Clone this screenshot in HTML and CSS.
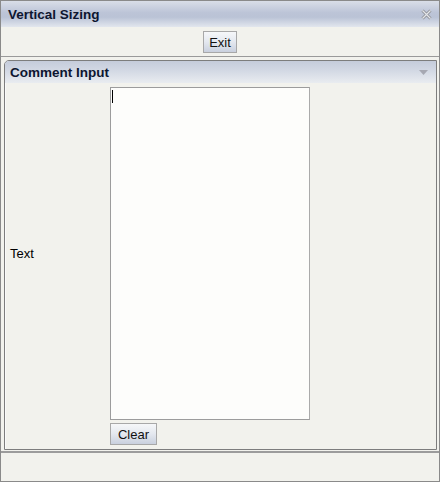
FILE: index.html
```html
<!DOCTYPE html>
<html lang="en">
<head>
  <meta charset="UTF-8" />
  <title>Vertical Sizing</title>
  <link rel="stylesheet" href="styles.css">
</head>
<body>

<div class="window">

  <div class="titlebar">
    <span class="title">Vertical Sizing</span>
    <svg class="close" width="11" height="11" viewBox="0 0 11 11">
      <path d="M1.5 1.5 L9.5 9.5 M9.5 1.5 L1.5 9.5" stroke="#8e9096" stroke-width="3" fill="none"/>
      <path d="M1.5 1.5 L9.5 9.5 M9.5 1.5 L1.5 9.5" stroke="#e4e6ea" stroke-width="1.2" fill="none"/>
    </svg>
  </div>

  <div class="toolbar">
    <button class="btn">Exit</button>
  </div>

  <div class="content">
    <div class="panel">
      <div class="panel-head">
        <span class="panel-title">Comment Input</span>
        <svg class="arrow" width="9" height="6" viewBox="0 0 9 6">
          <path d="M0 0 L9 0 L4.5 5 Z" fill="#a6a8b2"/>
        </svg>
      </div>
      <div class="panel-body">
        <label for="comment" class="label">Text</label>
        <div class="field">
          <textarea id="comment"></textarea>
          <span class="caret"></span>
        </div>
        <div class="actions">
          <button class="btn btn-wide">Clear</button>
        </div>
      </div>
    </div>
  </div>

  <div class="statusbar"></div>
</div>

</body>
</html>
```

FILE: styles.css
```css
:root {
  --bg: #f2f2ed;
  --line: #8a8a8a;
  --text: #000;
  --title: #0d1630;
}
* {
  box-sizing: border-box;
}
body {
  margin: 0;
  font-family: 'Liberation Sans', Arial, sans-serif;
  font-size: 13px;
  color: var(--text);
  background: var(--bg);
}
.window {
  width: 440px;
  height: 482px;
  border: 1px solid var(--line);
  display: flex;
  flex-direction: column;
  background: var(--bg);
}
.titlebar {
  height: 26px;
  flex: none;
  display: flex;
  align-items: center;
  justify-content: space-between;
  padding: 0 7px 0 7px;
  background: linear-gradient(#d9dee8, #bcc4d7 45%, #bac3d6 62%, #e2e6ee);
}
.title,
.panel-title {
  font-weight: bold;
  font-size: 13.5px;
  color: var(--title);
}
.toolbar {
  height: 30px;
  flex: none;
  display: flex;
  justify-content: center;
  padding-top: 4px;
  border-bottom: 1px solid #9a9a9a;
}
.btn {
  height: 22px;
  min-width: 32px;
  padding: 0 5px;
  font-family: inherit;
  font-size: 13px;
  color: #111;
  border: 1px solid #a8a8a8;
  background: linear-gradient(#f6f7f9, #e4e8ef 50%, #c9d0de);
  cursor: pointer;
}
.btn-wide {
  min-width: 47px;
}
.content {
  flex: 1;
  padding: 3px 2px 1px 3px;
}
.panel {
  height: 100%;
  border: 1px solid #7d7d7d;
  border-top-left-radius: 5px;
  display: flex;
  flex-direction: column;
  box-shadow: inset 1px 1px 0 #fafafa;
}
.panel-head {
  height: 22px;
  flex: none;
  display: flex;
  align-items: center;
  justify-content: space-between;
  padding: 0 8px 0 5px;
  border-top-left-radius: 4px;
  background: linear-gradient(#c5ccdb, #d1d7e3 40%, #e9ecf0);
}
.arrow {
  margin-top: 1px;
}
.panel-body {
  flex: 1;
  display: grid;
  grid-template-columns: 100px 200px;
  grid-template-rows: 333px auto;
  row-gap: 3px;
  padding: 4px 0 3px 5px;
}
.label {
  align-self: center;
}
.field {
  position: relative;
}
textarea {
  width: 200px;
  height: 333px;
  margin: 0;
  display: block;
  resize: none;
  border: 1px solid #9c9c9c;
  border-right-color: #aaa;
  background: #fdfdfb;
  font-family: inherit;
  font-size: 13px;
}
.caret {
  position: absolute;
  left: 2px;
  top: 3px;
  width: 1px;
  height: 13px;
  background: #000;
}
.actions {
  grid-column: 2;
}
.statusbar {
  height: 30px;
  flex: none;
  border-top: 2px solid #9c9c9c;
}
```
